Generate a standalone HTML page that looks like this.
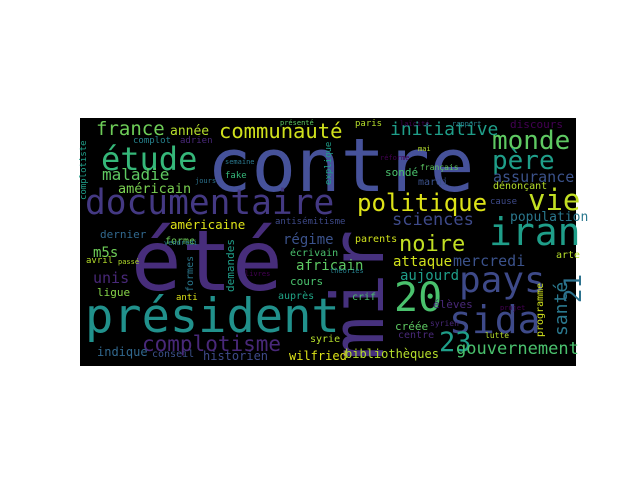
<!DOCTYPE html>
<html><head><meta charset="utf-8"><style>
html,body{margin:0;padding:0;background:#fff;width:640px;height:480px;overflow:hidden}
#c{position:absolute;left:80px;top:118px;width:496px;height:248px;background:#000;overflow:hidden}
#w{position:absolute;left:0;top:0;width:640px;height:480px;overflow:hidden}
#w span{position:absolute;font-family:"DejaVu Sans Mono","Liberation Mono",monospace;line-height:1;white-space:nowrap}
.v{transform:rotate(-90deg);transform-origin:0 0}
</style></head><body>
<div id="c"></div>
<div id="w">
<span style="left:207px;top:129px;font-size:74px;color:#46529a">contre</span>
<span style="left:131px;top:219px;font-size:84px;color:#472d7b">été</span>
<span class="v" style="left:322px;top:360px;font-size:72px;color:#46317e">mir</span>
<span style="left:85px;top:293px;font-size:47px;color:#21918c">président</span>
<span style="left:85px;top:186px;font-size:34.5px;color:#443983">documentaire</span>
<span style="left:101px;top:143px;font-size:32px;color:#35b779">étude</span>
<span style="left:96px;top:120px;font-size:19px;color:#6ece58">france</span>
<span style="left:170px;top:125px;font-size:13px;color:#b5de2b">année</span>
<span style="left:219px;top:121px;font-size:20.5px;color:#d0e11c">communauté</span>
<span style="left:102px;top:167px;font-size:16px;color:#5ec962">maladie</span>
<span style="left:118px;top:183px;font-size:13.5px;color:#7ad151">américain</span>
<span style="left:170px;top:219px;font-size:12.5px;color:#dde318">américaine</span>
<span style="left:133px;top:137px;font-size:9px;color:#26828e">complot</span>
<span style="left:180px;top:137px;font-size:9px;color:#482878">adrien</span>
<span class="v" style="left:80px;top:200px;font-size:9px;color:#1f9e89">complotiste</span>
<span style="left:100px;top:229px;font-size:11px;color:#31688e">dernier</span>
<span style="left:165px;top:237px;font-size:10px;color:#6ece58">forme</span>
<span style="left:275px;top:218px;font-size:9px;color:#3e4a89">antisémitisme</span>
<span style="left:283px;top:233px;font-size:14px;color:#3b528b">régime</span>
<span style="left:93px;top:246px;font-size:14px;color:#6ece58">m5s</span>
<span style="left:86px;top:257px;font-size:9px;color:#b5de2b">avril</span>
<span style="left:93px;top:271px;font-size:15px;color:#482878">unis</span>
<span style="left:97px;top:287px;font-size:11px;color:#86d549">ligue</span>
<span style="left:296px;top:259px;font-size:14px;color:#5ec962">africain</span>
<span style="left:290px;top:249px;font-size:10px;color:#4ac16d">écrivain</span>
<span style="left:290px;top:276px;font-size:11px;color:#4ac16d">cours</span>
<span style="left:278px;top:292px;font-size:10px;color:#20a486">auprès</span>
<span style="left:176px;top:294px;font-size:9px;color:#dde318">anti</span>
<span class="v" style="left:225px;top:292px;font-size:11px;color:#1f9e89">demandes</span>
<span class="v" style="left:186px;top:292px;font-size:10px;color:#2a788e">formes</span>
<span style="left:142px;top:334px;font-size:21px;color:#482878">complotisme</span>
<span style="left:97px;top:346px;font-size:12px;color:#31688e">indique</span>
<span style="left:152px;top:350px;font-size:10px;color:#3b528b">conseil</span>
<span style="left:203px;top:350px;font-size:12px;color:#3e4a89">historien</span>
<span style="left:289px;top:350px;font-size:12px;color:#dde318">wilfried</span>
<span style="left:310px;top:335px;font-size:10px;color:#b5de2b">syrie</span>
<span style="left:355px;top:120px;font-size:9px;color:#b5de2b">paris</span>
<span style="left:390px;top:121px;font-size:18px;color:#1f9e89">initiative</span>
<span style="left:510px;top:119px;font-size:11px;color:#440154">discours</span>
<span style="left:492px;top:128px;font-size:26px;color:#5ec962">monde</span>
<span style="left:492px;top:148px;font-size:26px;color:#1f9e89">père</span>
<span style="left:493px;top:170px;font-size:15px;color:#3b528b">assurance</span>
<span style="left:357px;top:191px;font-size:24px;color:#dde318">politique</span>
<span style="left:528px;top:186px;font-size:29px;color:#c2df23">vie</span>
<span style="left:385px;top:167px;font-size:11px;color:#4ac16d">sondé</span>
<span style="left:418px;top:178px;font-size:10px;color:#3b528b">mardi</span>
<span style="left:420px;top:164px;font-size:8px;color:#5ec962">français</span>
<span style="left:493px;top:182px;font-size:10px;color:#b5de2b">dénonçant</span>
<span style="left:392px;top:212px;font-size:17px;color:#3e4a89">sciences</span>
<span style="left:489px;top:213px;font-size:38px;color:#1f9e89">iran</span>
<span style="left:510px;top:211px;font-size:13px;color:#2a788e">population</span>
<span style="left:490px;top:198px;font-size:9px;color:#3e4a89">cause</span>
<span style="left:355px;top:235px;font-size:10px;color:#d0e11c">parents</span>
<span style="left:399px;top:234px;font-size:22px;color:#c2df23">noire</span>
<span style="left:393px;top:255px;font-size:14px;color:#d0e11c">attaque</span>
<span style="left:453px;top:254px;font-size:15px;color:#3b528b">mercredi</span>
<span style="left:556px;top:251px;font-size:10px;color:#b5de2b">arte</span>
<span style="left:400px;top:269px;font-size:14px;color:#1f9e89">aujourd</span>
<span style="left:459px;top:263px;font-size:36px;color:#3e4a89">pays</span>
<span class="v" style="left:553px;top:336px;font-size:18px;color:#2a788e">santé</span>
<span class="v" style="left:561px;top:303px;font-size:24px;color:#2c728e">21</span>
<span class="v" style="left:536px;top:337px;font-size:10px;color:#d0e11c">programme</span>
<span style="left:394px;top:278px;font-size:40px;color:#4ac16d">20</span>
<span style="left:433px;top:299px;font-size:11px;color:#482878">élèves</span>
<span style="left:352px;top:293px;font-size:10px;color:#4ac16d">crif</span>
<span style="left:449px;top:301px;font-size:38px;color:#3e4a89">sida</span>
<span style="left:395px;top:321px;font-size:11px;color:#5ec962">créée</span>
<span style="left:398px;top:331px;font-size:10px;color:#482878">centre</span>
<span style="left:439px;top:329px;font-size:27px;color:#1f9e89">23</span>
<span style="left:456px;top:341px;font-size:17px;color:#4ac16d">gouvernement</span>
<span style="left:345px;top:348px;font-size:12px;color:#b5de2b">bibliothèques</span>
<span style="left:485px;top:332px;font-size:8px;color:#b5de2b">lutte</span>
<span style="left:430px;top:320px;font-size:8px;color:#482878">syrien</span>
<span style="left:400px;top:121px;font-size:7px;color:#440154">laïcité</span>
<span style="left:452px;top:121px;font-size:7px;color:#26828e">rapport</span>
<span style="left:380px;top:155px;font-size:7px;color:#440154">réforme</span>
<span style="left:225px;top:159px;font-size:7px;color:#2a788e">semaine</span>
<span style="left:225px;top:172px;font-size:9px;color:#35b779">fake</span>
<span style="left:195px;top:178px;font-size:7px;color:#2c728e">jours</span>
<span style="left:280px;top:120px;font-size:7px;color:#5ec962">présenté</span>
<span class="v" style="left:325px;top:185px;font-size:9px;color:#1f9e89">explique</span>
<span style="left:418px;top:146px;font-size:7px;color:#b5de2b">mai</span>
<span style="left:330px;top:268px;font-size:7px;color:#26828e">théories</span>
<span style="left:500px;top:305px;font-size:7px;color:#440154">projet</span>
<span style="left:245px;top:271px;font-size:7px;color:#440154">livres</span>
<span style="left:118px;top:259px;font-size:7px;color:#b5de2b">passé</span>
<span style="left:164px;top:240px;font-size:7px;color:#2a788e">vendredi</span>
</div>
</body></html>
